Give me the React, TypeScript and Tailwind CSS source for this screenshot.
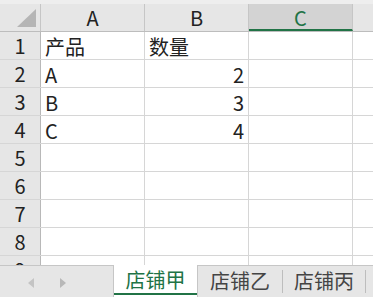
import React from "react";

const COLS = ["A", "B", "C", ""];
const rows: { n: number; a?: string; b?: string }[] = [
  { n: 1, a: "产品", b: "数量" },
  { n: 2, a: "A", b: "2" },
  { n: 3, a: "B", b: "3" },
  { n: 4, a: "C", b: "4" },
  { n: 5 },
  { n: 6 },
  { n: 7 },
  { n: 8 },
  { n: 9 },
];

const font = {
  fontFamily: '"Noto Sans CJK SC", "Liberation Sans", sans-serif',
};

export default function App() {
  return (
    <div
      className="w-[373px] h-[297px] overflow-hidden bg-white text-[20px] text-[#222]"
      style={font}
    >
      {/* sheet */}
      <div className="h-[265px] overflow-hidden">
        <div className="h-[4px] bg-[#eeeeee]" />
        {/* column headers */}
        <div className="flex h-[28px] bg-[#e6e6e6] border-b border-[#bdbdbd]">
          <div className="relative w-[41px] shrink-0 border-r border-[#c6c6c6]">
            <svg className="absolute left-[17px] top-[5px]" width="19" height="18">
              <polygon points="0,18 19,0 19,18" fill="#b5b5b5" />
            </svg>
          </div>
          {COLS.map((c, i) =>
            c === "C" ? (
              <div
                key={i}
                className="w-[104px] shrink-0 flex items-center justify-center bg-[#d3d3d3] border-r border-[#c6c6c6] border-b-2 border-b-[#217346] text-[#217346] leading-none pt-[2px]"
              >
                C
              </div>
            ) : (
              <div
                key={i}
                className={`${i === 3 ? "flex-1" : "w-[104px] shrink-0 border-r border-[#c6c6c6]"} flex items-center justify-center leading-none`}
              >
                {c}
              </div>
            )
          )}
        </div>
        {rows.map((r) => (
          <div key={r.n} className="flex h-[28px] border-b border-[#d6d6d6]">
            <div className="w-[41px] shrink-0 flex items-center justify-center bg-[#e6e6e6] border-r border-[#b8b8b8] leading-none">
              {r.n}
            </div>
            <div className="w-[104px] shrink-0 border-r border-[#d6d6d6] flex items-center pl-[4px] leading-none pt-[2px]">
              {r.a}
            </div>
            <div
              className={`w-[104px] shrink-0 border-r border-[#d6d6d6] flex items-center leading-none pt-[2px] ${
                r.n === 1 ? "pl-[4px]" : "justify-end pr-[4px]"
              }`}
            >
              {r.b}
            </div>
            <div className="w-[104px] shrink-0 border-r border-[#d6d6d6]" />
            <div className="flex-1" />
          </div>
        ))}
      </div>

      {/* sheet tabs */}
      <div className="flex h-[32px] bg-[#e6e6e6]">
        <div className="w-[113px] shrink-0 border-t border-[#c6c6c6] relative">
          <svg className="absolute left-[27px] top-[12px]" width="8" height="10">
            <polygon points="7,0 7,10 1,5" fill="#c4c4c4" />
          </svg>
          <svg className="absolute left-[59px] top-[12px]" width="8" height="10">
            <polygon points="1,0 1,10 7,5" fill="#b8b8b8" />
          </svg>
        </div>
        <div className="w-[85px] shrink-0 bg-white border-l border-r border-[#c6c6c6] flex flex-col">
          <div className="flex-1 flex items-center justify-center text-[#217346] leading-none pt-[2px]">
            店铺甲
          </div>
          <div className="h-[2px] bg-[#217346] mb-[2px]" />
        </div>
        <div className="flex-1 border-t border-[#c6c6c6] flex items-center">
          <div className="w-[84px] flex items-center justify-center text-[#444] leading-none pb-[1px]">
            店铺乙
          </div>
          <div className="w-px h-[23px] bg-[#bdbdbd]" />
          <div className="w-[82px] flex items-center justify-center text-[#444] leading-none pb-[1px]">
            店铺丙
          </div>
          <div className="w-px h-[23px] bg-[#bdbdbd]" />
        </div>
      </div>
    </div>
  );
}
